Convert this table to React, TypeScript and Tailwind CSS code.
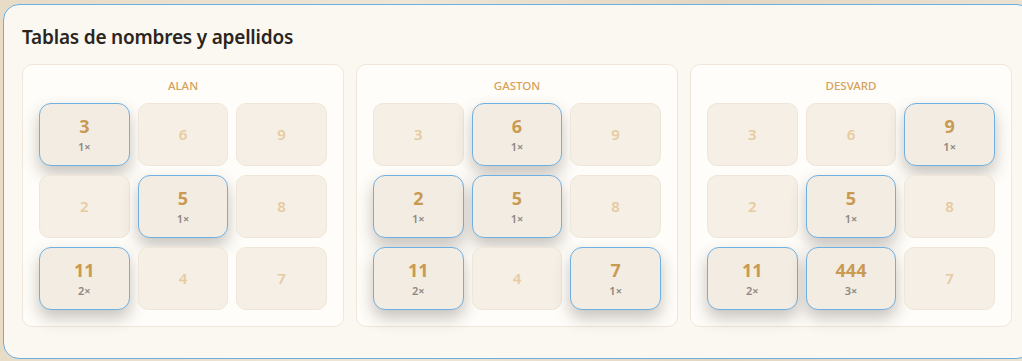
import React from 'react';

type Cell = { value: string; count?: number };

const tables: { name: string; cells: Cell[] }[] = [
    {
        name: 'ALAN',
        cells: [
            { value: '3', count: 1 }, { value: '6' }, { value: '9' },
            { value: '2' }, { value: '5', count: 1 }, { value: '8' },
            { value: '11', count: 2 }, { value: '4' }, { value: '7' },
        ],
    },
    {
        name: 'GASTON',
        cells: [
            { value: '3' }, { value: '6', count: 1 }, { value: '9' },
            { value: '2', count: 1 }, { value: '5', count: 1 }, { value: '8' },
            { value: '11', count: 2 }, { value: '4' }, { value: '7', count: 1 },
        ],
    },
    {
        name: 'DESVARD',
        cells: [
            { value: '3' }, { value: '6' }, { value: '9', count: 1 },
            { value: '2' }, { value: '5', count: 1 }, { value: '8' },
            { value: '11', count: 2 }, { value: '444', count: 3 }, { value: '7' },
        ],
    },
];

const Tile = ({ cell }: { cell: Cell }) => {
    if (cell.count) {
        return (
            <div className="h-[63px] rounded-[12px] border border-[#6fb0e2] bg-[#f3ece2] shadow-[0_8px_16px_rgba(70,60,50,0.3)] flex flex-col items-center justify-center">
                <span className="text-[18px] leading-[22px] font-bold text-[#c99a52]">{cell.value}</span>
                <span className="text-[11px] leading-[14px] font-semibold text-[#8d8780] mt-[3px]">{cell.count}×</span>
            </div>
        );
    }
    return (
        <div className="h-[63px] rounded-[10px] border border-[#f0e6d8] bg-[#f6efe5] flex items-center justify-center">
            <span className="text-[15px] font-semibold text-[#e6cb9f]">{cell.value}</span>
        </div>
    );
};

export default function App() {
    return (
        <div className="w-[1022px] h-[361px] overflow-hidden bg-[linear-gradient(90deg,#e8dcc7,#efe6d6_40%,#e4d7c1_70%,#ece2d2)] pt-[4px] pl-[3px]" style={{ fontFamily: '"Noto Sans", "Open Sans", sans-serif' }}>
            <div className="w-[1030px] h-[355px] rounded-[16px] border border-[#6aaee2] bg-[#fbf7f1] pt-[18px] pl-[18px]">
                <h1 className="text-[19px] leading-[28px] font-semibold text-[#2a2520] tracking-[-0.2px]">Tablas de nombres y apellidos</h1>
                <div className="mt-[13px] flex gap-3">
                    {tables.map(table => (
                        <div key={table.name} className="w-[322px] h-[263px] rounded-[10px] border border-[#f0e7da] bg-[#fffdf9] px-4 pt-[13px]">
                            <div className="text-center text-[11.5px] leading-[16px] font-medium text-[#d5a259]">{table.name}</div>
                            <div className="mt-[9px] grid grid-cols-3 gap-x-2 gap-y-[9px]">
                                {table.cells.map((cell, i) => (
                                    <Tile key={i} cell={cell} />
                                ))}
                            </div>
                        </div>
                    ))}
                </div>
            </div>
        </div>
    );
}
